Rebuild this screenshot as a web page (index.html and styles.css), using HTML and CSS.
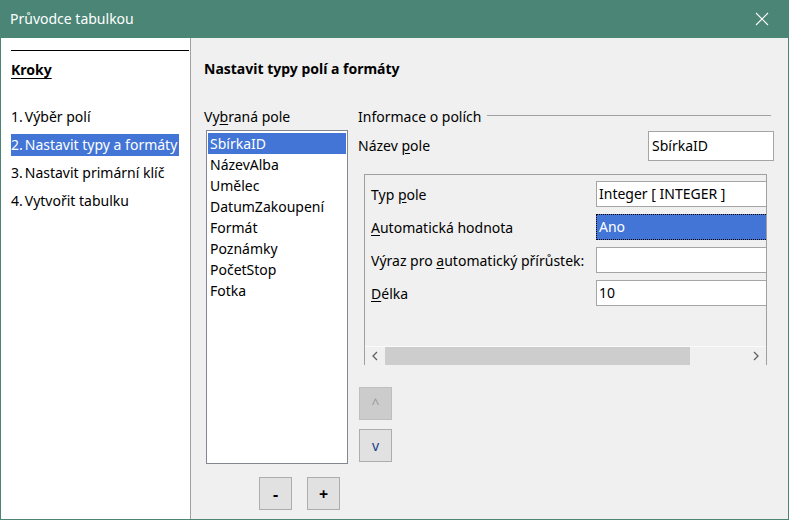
FILE: index.html
```html
<!DOCTYPE html>
<html lang="cs">
<head>
<meta charset="utf-8">
<title>Průvodce tabulkou</title>
<link rel="stylesheet" href="styles.css">
</head>
<body>
<div class="window">
  <div class="titlebar">
    <span class="title">Průvodce tabulkou</span>
    <svg class="close" width="14" height="14" viewBox="0 0 14 14"><path d="M1 1 L13 13 M13 1 L1 13" stroke="#fff" stroke-width="1.1" fill="none"/></svg>
  </div>
  <div class="body">
    <aside class="sidebar">
      <div class="rule"></div>
      <div class="steps-title">Kroky</div>
      <ul class="steps">
        <li class="step"><span class="num">1.</span>Výběr polí</li>
        <li class="step active"><span class="num">2.</span>Nastavit typy a formáty</li>
        <li class="step"><span class="num">3.</span>Nastavit primární klíč</li>
        <li class="step"><span class="num">4.</span>Vytvořit tabulku</li>
      </ul>
    </aside>
    <main class="content">
      <h1 class="heading">Nastavit typy polí a formáty</h1>
      <div class="columns">
        <div class="left-col">
          <div class="label">Vy<u>b</u>raná pole</div>
          <ul class="listbox">
            <li class="item selected">SbírkaID</li>
            <li class="item">NázevAlba</li>
            <li class="item">Umělec</li>
            <li class="item">DatumZakoupení</li>
            <li class="item">Formát</li>
            <li class="item">Poznámky</li>
            <li class="item">PočetStop</li>
            <li class="item">Fotka</li>
          </ul>
          <div class="pm-buttons">
            <button class="btn">-</button>
            <button class="btn">+</button>
          </div>
        </div>
        <div class="right-col">
          <div class="group-title"><span>Informace o polích</span><span class="group-line"></span></div>
          <div class="name-row">
            <span>Název <u>p</u>ole</span>
            <div class="field name-field">SbírkaID</div>
          </div>
          <div class="frame">
            <div class="prop-row">
              <span class="prop-label">Typ <u>p</u>ole</span>
              <div class="field prop-field">Integer [ INTEGER ]</div>
            </div>
            <div class="prop-row">
              <span class="prop-label"><u>A</u>utomatická hodnota</span>
              <div class="field prop-field focused">Ano</div>
            </div>
            <div class="prop-row">
              <span class="prop-label">Výraz pro <u>a</u>utomatický přírůstek:</span>
              <div class="field prop-field"></div>
            </div>
            <div class="prop-row">
              <span class="prop-label"><u>D</u>élka</span>
              <div class="field prop-field">10</div>
            </div>
            <div class="hscroll">
              <span class="arrow">
                <svg width="8" height="10" viewBox="0 0 8 10"><path d="M6 1 L2 5 L6 9" stroke="#606060" stroke-width="1.3" fill="none"/></svg>
              </span>
              <span class="track"><span class="thumb"></span></span>
              <span class="arrow">
                <svg width="8" height="10" viewBox="0 0 8 10"><path d="M2 1 L6 5 L2 9" stroke="#606060" stroke-width="1.3" fill="none"/></svg>
              </span>
            </div>
          </div>
          <div class="ud-buttons">
            <button class="btn disabled">^</button>
            <button class="btn">v</button>
          </div>
        </div>
      </div>
    </main>
  </div>
</div>
</body>
</html>
```

FILE: styles.css
```css
* { box-sizing: border-box; }
html, body { margin: 0; padding: 0; }
body {
  font-family: "Noto Sans", "Open Sans", sans-serif;
  font-size: 14px;
  line-height: 20px;
  color: #000;
  background: #fff;
}
ul { list-style: none; margin: 0; padding: 0; }
u { text-decoration: underline; text-underline-offset: 2px; }

.window {
  width: 789px;
  height: 520px;
  display: flex;
  flex-direction: column;
}
.titlebar {
  height: 38px;
  background: #4a8575;
  display: flex;
  align-items: center;
  justify-content: space-between;
  padding: 0 20px 0 10px;
  color: #fff;
  font-size: 14px;
}
.title { padding-bottom: 1px; }
.close { display: block; }

.body {
  flex: 1;
  display: flex;
  border: 1px solid #4a8575;
  border-top: none;
  background: #f0f0f0;
}
.sidebar {
  width: 190px;
  background: #fff;
  border-right: 1px solid #a0a0a0;
  padding: 12px 1px 0 10px;
}
.rule { border-top: 1px solid #000; }
.steps-title {
  margin-top: 9px;
  font-weight: bold;
  text-decoration: underline;
  text-underline-offset: 3px;
}
.steps { margin-top: 26px; }
.step {
  width: fit-content;
  height: 22px;
  line-height: 22px;
  padding-right: 2px;
  margin-bottom: 6px;
}
.step .num { margin-right: 2px; }
.step.active { background: #4275d5; color: #fff; }

.content {
  flex: 1;
  padding: 21px 0 0 13px;
}
.heading {
  margin: 0;
  font-size: 14px;
  font-weight: bold;
  line-height: 20px;
}
.columns {
  display: flex;
  gap: 10px;
  margin-top: 28px;
}
.left-col { width: 144px; }
.listbox {
  margin: 3px 0 0 2px;
  width: 142px;
  height: 334px;
  background: #fff;
  border: 1px solid #828790;
  padding: 2px 1px;
}
.item {
  height: 21px;
  line-height: 21px;
  padding-left: 2px;
}
.item.selected { background: #4275d5; color: #fff; }

.btn {
  width: 33px;
  height: 33px;
  border: 1px solid #adadad;
  background: #e1e1e1;
  font-family: "Noto Sans", sans-serif;
  font-size: 16px;
  font-weight: bold;
  padding: 0;
  color: #000;
}
.pm-buttons {
  display: flex;
  gap: 15px;
  margin: 13px 0 0 55px;
}
.right-col { width: 416px; }
.group-title {
  display: flex;
  align-items: center;
  gap: 6px;
}
.group-line {
  flex: 1;
  height: 1px;
  background: #a0a0a0;
  margin-right: 3px;
  margin-top: -3px;
}
.name-row {
  margin-top: 4px;
  display: flex;
  justify-content: space-between;
  align-items: center;
}
.field {
  background: #fff;
  border: 1px solid #a5a5a5;
  padding-left: 2px;
  line-height: 24px;
  white-space: nowrap;
  overflow: hidden;
}
.name-field {
  width: 126px;
  height: 30px;
  line-height: 28px;
  padding-left: 3px;
}
.frame {
  margin: 13px 0 0 6px;
  width: 403px;
  height: 191px;
  border: 1px solid #a0a0a0;
  border-bottom: none;
  display: flex;
  flex-direction: column;
  padding-top: 6px;
  overflow: hidden;
}
.prop-row {
  display: flex;
  align-items: center;
  height: 26px;
  margin-bottom: 7px;
}
.prop-label { width: 231px; padding-left: 6px; padding-top: 1px; }
.prop-field {
  flex: 1;
  height: 26px;
  border-right: none;
}
.prop-field.focused {
  background: #4275d5;
  color: #fff;
  border: 1px dotted #000;
  border-right: none;
  outline: 1px solid #4275d5;
  outline-offset: -2px;
}
.hscroll {
  margin-top: auto;
  height: 19px;
  border-top: 1px solid #fafafa;
  display: flex;
  align-items: center;
}
.arrow {
  width: 20px;
  display: flex;
  justify-content: center;
  align-items: center;
}
.track {
  flex: 1;
  height: 18px;
  display: flex;
}
.thumb {
  width: 305px;
  background: #cdcdcd;
}
.ud-buttons {
  margin: 22px 0 0 1px;
  display: flex;
  flex-direction: column;
  gap: 9px;
}
.btn.disabled {
  background: #cccccc;
  border-color: #bfbfbf;
}
.ud-buttons .btn { font-weight: normal; font-size: 14px; color: #1a3c8a; }
.ud-buttons .btn.disabled { color: #9a9a9a; }
```
